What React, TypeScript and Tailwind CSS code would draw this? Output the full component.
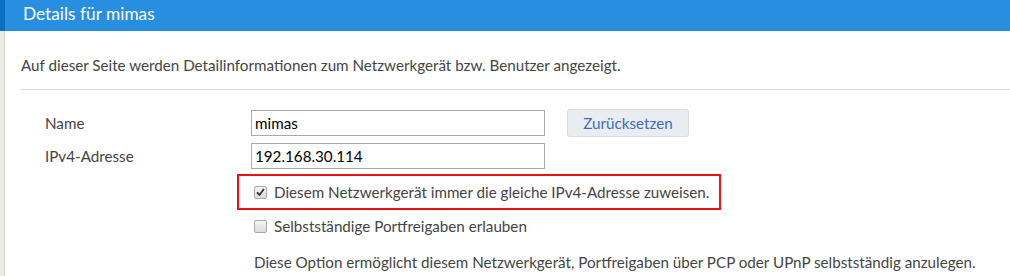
import React from "react";

function Check({ checked }: { checked: boolean }) {
  return (
    <span className="inline-flex h-[13px] w-[13px] items-center justify-center rounded-[2px] border border-[#a9a9a9] bg-gradient-to-b from-[#f4f4f4] to-[#dcdcdc]">
      {checked && (
        <svg width="9" height="9" viewBox="0 0 9 9">
          <path d="M1.5 4.8 L3.5 7 L7.5 1.5" fill="none" stroke="#333" strokeWidth="1.8" strokeLinecap="round" strokeLinejoin="round" />
        </svg>
      )}
    </span>
  );
}

export default function App() {
  return (
    <div
      className="flex h-[276px] w-[1010px] overflow-hidden bg-white text-[15.2px] text-[#444]"
      style={{ fontFamily: '"Source Sans Pro", Lato, "Noto Sans", sans-serif' }}
    >
      <div className="flex w-[5px] shrink-0 flex-col">
        <div className="h-[31px] bg-[#0b6fc2]" />
        <div className="flex-1 border-r border-[#d6d6cc] bg-[#ecece6]" />
      </div>
      <div className="flex min-w-0 flex-1 flex-col">
        <div className="flex h-[31px] items-center bg-[#278ee0] pb-[4px] pl-[18px] text-[17.3px] text-white">
          Details für mimas
        </div>
        <div className="pl-[16px]">
          <p className="pt-[24px] leading-[20px]">
            Auf dieser Seite werden Detailinformationen zum Netzwerkgerät bzw. Benutzer angezeigt.
          </p>
          <div className="mt-[14px] h-px bg-[#d4d4d4]" />
          <div className="mt-[19px] flex items-center">
            <span className="w-[230px] pl-[24px]">Name</span>
            <div className="flex h-[26px] w-[294px] items-center border border-[#a9a9a9] px-[3px] text-black">
              mimas
            </div>
            <button className="ml-[22px] h-[28px] w-[122px] rounded-[3px] border border-[#d9dde3] bg-[#e9edf2] text-[#3c6db3]">
              Zurücksetzen
            </button>
          </div>
          <div className="mt-[6px] flex items-center">
            <span className="w-[230px] pl-[24px]">IPv4-Adresse</span>
            <div className="flex h-[26px] w-[294px] items-center border border-[#a9a9a9] px-[3px] text-black">
              192.168.30.114
            </div>
          </div>
          <div className="ml-[216px] mt-[5px] flex h-[36px] w-[484px] items-center border-2 border-[#ee1111] pl-[15px]">
            <Check checked />
            <span className="ml-[7px]">Diesem Netzwerkgerät immer die gleiche IPv4-Adresse zuweisen.</span>
          </div>
          <div className="ml-[233px] mt-[5px] flex items-center">
            <Check checked={false} />
            <span className="ml-[7px]">Selbstständige Portfreigaben erlauben</span>
          </div>
          <p className="ml-[233px] mt-[13px]">
            Diese Option ermöglicht diesem Netzwerkgerät, Portfreigaben über PCP oder UPnP selbstständig anzulegen.
          </p>
        </div>
      </div>
    </div>
  );
}
